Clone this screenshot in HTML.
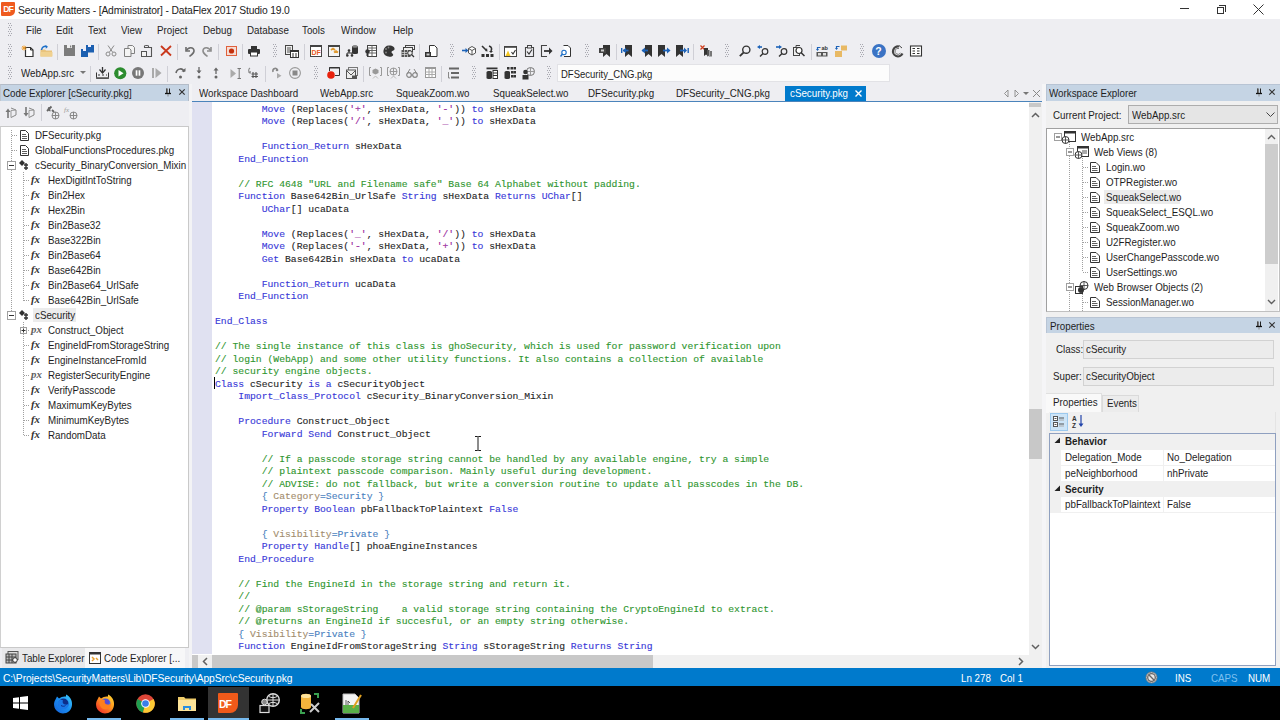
<!DOCTYPE html>
<html><head><meta charset="utf-8">
<style>
*{margin:0;padding:0;box-sizing:border-box}
html,body{width:1280px;height:720px;overflow:hidden;background:#eeeef2;font-family:"Liberation Sans",sans-serif;font-size:10.3px;color:#1e1e1e;position:relative}
.a{position:absolute}
.t{position:absolute;white-space:pre;line-height:13.5px;height:13.5px;font-size:10.7px;transform:scaleX(0.915);transform-origin:0 0}
#code{left:215px;top:103.8px;font-family:"Liberation Mono",monospace;font-size:9.73px;line-height:12.5px;white-space:pre;letter-spacing:0;color:#262626;-webkit-text-stroke:0.12px currentColor}
.k{color:#3838d8}.c{color:#2f962f}.s{color:#9a2a9e}.b{color:#4a7fc0}.m{color:#a38d6d}
.hdr{background:#c5d4e4}
.grip{position:absolute;width:4px;background-image:radial-gradient(circle,#a0a0a8 0.7px,transparent 0.8px);background-size:2px 2px}
.sep{position:absolute;width:1px;background:#cfcfd6}

.dv{position:absolute;width:1px;background-image:linear-gradient(#a0a0a0 50%,transparent 50%);background-size:1px 2px}
.dh{position:absolute;height:1px;background-image:linear-gradient(90deg,#a0a0a0 50%,transparent 50%);background-size:2px 1px}
svg{position:absolute;overflow:visible}
</style></head><body>
<!-- TITLE BAR -->
<div class="a" style="left:0;top:0;width:1280px;height:19px;background:#fff"></div>
<div class="a" style="left:1px;top:2px;width:14px;height:14px;background:#ef5b1f;border-radius:1px 1px 5px 1px"></div>
<div class="t" style="left:3.2px;top:3.6px;font-size:8.6px;line-height:10px;height:10px;color:#fff;font-weight:bold;letter-spacing:-0.9px;transform:none">DF</div>
<div class="t" style="left:18px;top:3.9px;font-size:10.3px;letter-spacing:-0.15px;color:#222;transform:none">Security Matters - [Administrator] - DataFlex 2017 Studio 19.0</div>
<div class="a" style="left:1180px;top:8px;width:9px;height:1px;background:#333"></div>
<div class="a" style="left:1217px;top:7px;width:7px;height:7px;border:1px solid #333"></div>
<div class="a" style="left:1219px;top:5px;width:7px;height:7px;border-top:1px solid #333;border-right:1px solid #333"></div>
<svg style="left:1253px;top:4px" width="11" height="11"><path d="M0.5 0.5L10.5 10.5M10.5 0.5L0.5 10.5" stroke="#333" stroke-width="1"/></svg>

<!-- MENU -->

<div class="t" style="left:25.5px;top:24.25px">File</div>
<div class="t" style="left:55.5px;top:24.25px">Edit</div>
<div class="t" style="left:87.5px;top:24.25px">Text</div>
<div class="t" style="left:120.5px;top:24.25px">View</div>
<div class="t" style="left:156.5px;top:24.25px">Project</div>
<div class="t" style="left:202.5px;top:24.25px">Debug</div>
<div class="t" style="left:246.5px;top:24.25px">Database</div>
<div class="t" style="left:302px;top:24.25px">Tools</div>
<div class="t" style="left:340.5px;top:24.25px">Window</div>
<div class="t" style="left:392.5px;top:24.25px">Help</div>

<!-- LEFT PANEL -->
<div class="a hdr" style="left:0;top:84px;width:189px;height:17px;border-top:1px solid #b4bcc8;border-right:1px solid #b4bcc8;border-left:1px solid #c0c6ce"></div>
<div class="t" style="left:3px;top:86.5px;color:#1e1e1e">Code Explorer [cSecurity.pkg]</div>
<svg style="left:164.5px;top:88px" width="6" height="9"><path d="M1.5 0.5V5M4.5 0.5V5" stroke="#222" stroke-width="1" fill="none"/><rect x="1.5" y="0.5" width="1.5" height="4.5" fill="#777"/><path d="M0 5.5H6" stroke="#111" stroke-width="1.3"/><path d="M3 6V8.5" stroke="#777" stroke-width="0.8"/></svg>
<svg style="left:178.5px;top:88.8px" width="6" height="6"><path d="M0.3 0.3L5.7 5.7M5.7 0.3L0.3 5.7" stroke="#333" stroke-width="1.2"/></svg>
<div class="a" style="left:0;top:101px;width:189px;height:25px;background:#eeeef2"></div>
<div class="sep" style="left:41px;top:104px;height:17px"></div>
<div class="a" style="left:0;top:126px;width:189px;height:522px;background:#fff;border:1px solid #c9c9c9;border-left-color:#d0d0d0"></div>
<div class="dv" style="left:11px;top:130px;height:186px"></div>
<div class="dv" style="left:23px;top:172px;height:129px"></div>
<div class="dv" style="left:23px;top:322px;height:114px"></div>
<div class="dh" style="left:12px;top:135px;width:6px"></div>
<svg style="left:20px;top:130px" width="9" height="11"><path d="M0.5 0.5H5.5L8.5 3.5V10.5H0.5Z" fill="#fff" stroke="#333"/><path d="M2 4.5H6M2 6.5H7M2 8.5H7" stroke="#333" stroke-width="0.8"/></svg>
<div class="t" style="left:35px;top:128.5px">DFSecurity.pkg</div>
<div class="dh" style="left:12px;top:150px;width:6px"></div>
<svg style="left:20px;top:145px" width="9" height="11"><path d="M0.5 0.5H5.5L8.5 3.5V10.5H0.5Z" fill="#fff" stroke="#333"/><path d="M2 4.5H6M2 6.5H7M2 8.5H7" stroke="#333" stroke-width="0.8"/></svg>
<div class="t" style="left:35px;top:143.5px">GlobalFunctionsProcedures.pkg</div>
<svg style="left:7px;top:161px" width="9" height="9"><rect x="0.5" y="0.5" width="8" height="8" fill="#fff" stroke="#a0a0a0"/><path d="M2 4.5H7" stroke="#333"/></svg>
<svg style="left:18px;top:159px" width="12" height="12"><path d="M1 4L4 1L7 4L4 7Z" fill="#333"/><path d="M6 6H10M8 4V11M6 9H10" stroke="#333" stroke-width="1.4"/></svg>
<div class="t" style="left:35px;top:158.5px">cSecurity_BinaryConversion_Mixin</div>
<div class="dh" style="left:24px;top:180px;width:6px"></div>
<div class="t" style="left:31px;top:173.0px;font-family:'Liberation Serif';font-style:italic;font-weight:bold;font-size:10.8px;color:#333;transform:none">fx</div>
<div class="t" style="left:47.5px;top:173.5px">HexDigitIntToString</div>
<div class="dh" style="left:24px;top:195px;width:6px"></div>
<div class="t" style="left:31px;top:188.0px;font-family:'Liberation Serif';font-style:italic;font-weight:bold;font-size:10.8px;color:#333;transform:none">fx</div>
<div class="t" style="left:47.5px;top:188.5px">Bin2Hex</div>
<div class="dh" style="left:24px;top:210px;width:6px"></div>
<div class="t" style="left:31px;top:203.0px;font-family:'Liberation Serif';font-style:italic;font-weight:bold;font-size:10.8px;color:#333;transform:none">fx</div>
<div class="t" style="left:47.5px;top:203.5px">Hex2Bin</div>
<div class="dh" style="left:24px;top:225px;width:6px"></div>
<div class="t" style="left:31px;top:218.0px;font-family:'Liberation Serif';font-style:italic;font-weight:bold;font-size:10.8px;color:#333;transform:none">fx</div>
<div class="t" style="left:47.5px;top:218.5px">Bin2Base32</div>
<div class="dh" style="left:24px;top:240px;width:6px"></div>
<div class="t" style="left:31px;top:233.0px;font-family:'Liberation Serif';font-style:italic;font-weight:bold;font-size:10.8px;color:#333;transform:none">fx</div>
<div class="t" style="left:47.5px;top:233.5px">Base322Bin</div>
<div class="dh" style="left:24px;top:255px;width:6px"></div>
<div class="t" style="left:31px;top:248.0px;font-family:'Liberation Serif';font-style:italic;font-weight:bold;font-size:10.8px;color:#333;transform:none">fx</div>
<div class="t" style="left:47.5px;top:248.5px">Bin2Base64</div>
<div class="dh" style="left:24px;top:270px;width:6px"></div>
<div class="t" style="left:31px;top:263.0px;font-family:'Liberation Serif';font-style:italic;font-weight:bold;font-size:10.8px;color:#333;transform:none">fx</div>
<div class="t" style="left:47.5px;top:263.5px">Base642Bin</div>
<div class="dh" style="left:24px;top:285px;width:6px"></div>
<div class="t" style="left:31px;top:278.0px;font-family:'Liberation Serif';font-style:italic;font-weight:bold;font-size:10.8px;color:#333;transform:none">fx</div>
<div class="t" style="left:47.5px;top:278.5px">Bin2Base64_UrlSafe</div>
<div class="dh" style="left:24px;top:300px;width:6px"></div>
<div class="t" style="left:31px;top:293.0px;font-family:'Liberation Serif';font-style:italic;font-weight:bold;font-size:10.8px;color:#333;transform:none">fx</div>
<div class="t" style="left:47.5px;top:293.5px">Base642Bin_UrlSafe</div>
<svg style="left:7px;top:311px" width="9" height="9"><rect x="0.5" y="0.5" width="8" height="8" fill="#fff" stroke="#a0a0a0"/><path d="M2 4.5H7" stroke="#333"/></svg>
<svg style="left:18px;top:309px" width="12" height="12"><path d="M1 4L4 1L7 4L4 7Z" fill="#333"/><path d="M6 6H10M8 4V11M6 9H10" stroke="#333" stroke-width="1.4"/></svg>
<div class="a" style="left:33px;top:308px;width:43px;height:14px;background:#ececec"></div>
<div class="t" style="left:35px;top:308.5px">cSecurity</div>
<div class="dh" style="left:24px;top:330px;width:6px"></div>
<svg style="left:20px;top:327px" width="7" height="7"><rect x="0.5" y="0.5" width="6" height="6" fill="#fff" stroke="#a0a0a0"/><path d="M1.5 3.5H5.5M3.5 1.5V5.5" stroke="#333"/></svg>
<div class="t" style="left:31px;top:323.0px;font-family:'Liberation Serif';font-style:italic;font-weight:bold;font-size:10.8px;color:#606060;transform:none">px</div>
<div class="t" style="left:47.5px;top:323.5px">Construct_Object</div>
<div class="dh" style="left:24px;top:345px;width:6px"></div>
<div class="t" style="left:31px;top:338.0px;font-family:'Liberation Serif';font-style:italic;font-weight:bold;font-size:10.8px;color:#333;transform:none">fx</div>
<div class="t" style="left:47.5px;top:338.5px">EngineIdFromStorageString</div>
<div class="dh" style="left:24px;top:360px;width:6px"></div>
<div class="t" style="left:31px;top:353.0px;font-family:'Liberation Serif';font-style:italic;font-weight:bold;font-size:10.8px;color:#333;transform:none">fx</div>
<div class="t" style="left:47.5px;top:353.5px">EngineInstanceFromId</div>
<div class="dh" style="left:24px;top:375px;width:6px"></div>
<div class="t" style="left:31px;top:368.0px;font-family:'Liberation Serif';font-style:italic;font-weight:bold;font-size:10.8px;color:#606060;transform:none">px</div>
<div class="t" style="left:47.5px;top:368.5px">RegisterSecurityEngine</div>
<div class="dh" style="left:24px;top:390px;width:6px"></div>
<div class="t" style="left:31px;top:383.0px;font-family:'Liberation Serif';font-style:italic;font-weight:bold;font-size:10.8px;color:#333;transform:none">fx</div>
<div class="t" style="left:47.5px;top:383.5px">VerifyPasscode</div>
<div class="dh" style="left:24px;top:405px;width:6px"></div>
<div class="t" style="left:31px;top:398.0px;font-family:'Liberation Serif';font-style:italic;font-weight:bold;font-size:10.8px;color:#333;transform:none">fx</div>
<div class="t" style="left:47.5px;top:398.5px">MaximumKeyBytes</div>
<div class="dh" style="left:24px;top:420px;width:6px"></div>
<div class="t" style="left:31px;top:413.0px;font-family:'Liberation Serif';font-style:italic;font-weight:bold;font-size:10.8px;color:#333;transform:none">fx</div>
<div class="t" style="left:47.5px;top:413.5px">MinimumKeyBytes</div>
<div class="dh" style="left:24px;top:435px;width:6px"></div>
<div class="t" style="left:31px;top:428.0px;font-family:'Liberation Serif';font-style:italic;font-weight:bold;font-size:10.8px;color:#333;transform:none">fx</div>
<div class="t" style="left:47.5px;top:428.5px">RandomData</div>
<div class="a" style="left:0;top:648px;width:189px;height:20px;background:#eeeef2"></div>
<div class="a" style="left:2px;top:648px;width:83px;height:20px;background:#e8e8ea"></div>
<div class="a" style="left:85px;top:648px;width:100px;height:20px;background:#f7f7f8"></div>
<div class="t" style="left:22px;top:651.5px">Table Explorer</div>
<div class="t" style="left:104px;top:651.5px">Code Explorer [...</div>
<svg style="left:5px;top:651px" width="14" height="13"><rect x="3" y="0.5" width="10" height="8" fill="#ddd" stroke="#555"/><rect x="1" y="3" width="10" height="9" fill="#bbb" stroke="#444"/><path d="M1 6H11M1 9H11M4 3V12M7 3V12" stroke="#444"/><circle cx="10" cy="9" r="2.3" fill="#fff" stroke="#333"/></svg>
<svg style="left:89px;top:652px" width="12" height="12"><rect x="0.5" y="0.5" width="11" height="11" fill="#fff" stroke="#333"/><rect x="0.5" y="0.5" width="11" height="2" fill="#333"/><path d="M3 5L5 7L3 9M7 6L9 8" stroke="#e8a030" stroke-width="1.5" fill="none"/></svg>
<div class="a" style="left:189px;top:84px;width:3px;height:584px;background:#f3f3f5"></div>
<!-- EDITOR -->
<div class="a" style="left:192px;top:102px;width:837px;height:553px;background:#fff"></div>
<div class="a" style="left:192px;top:100.5px;width:850px;height:1.6px;background:#4b84bb"></div>
<div class="a" style="left:192px;top:102px;width:20px;height:552px;background:#e0e1f1"></div>
<div class="t" style="left:199px;top:87px">Workspace Dashboard</div>
<div class="t" style="left:320px;top:87px">WebApp.src</div>
<div class="t" style="left:395.5px;top:87px">SqueakZoom.wo</div>
<div class="t" style="left:492.5px;top:87px">SqueakSelect.wo</div>
<div class="t" style="left:588px;top:87px">DFSecurity.pkg</div>
<div class="t" style="left:676px;top:87px">DFSecurity_CNG.pkg</div>
<div class="a" style="left:785px;top:86px;width:81px;height:15px;background:#007acc"></div>
<div class="t" style="left:790px;top:87px;color:#fff">cSecurity.pkg</div>
<svg style="left:855px;top:89.5px" width="7" height="7"><path d="M0.5 0.5L6.5 6.5M6.5 0.5L0.5 6.5" stroke="#fff" stroke-width="1.4"/></svg>
<svg style="left:1003px;top:89px" width="40" height="9"><path d="M5 1L1.5 4.5L5 8Z" fill="none" stroke="#888" stroke-width="0.9"/><path d="M12 1L15.5 4.5L12 8Z" fill="none" stroke="#888" stroke-width="0.9"/><path d="M20 3H26L23 6Z" fill="#777"/><path d="M30 1L37 8M37 1L30 8" stroke="#888" stroke-width="1"/></svg>
<div class="a" style="left:1029px;top:102px;width:13px;height:566px;background:#f0f0f0"></div>
<div class="a" style="left:1029px;top:103px;width:12px;height:4px;background:#c8c8c8"></div>
<svg style="left:1031px;top:112px" width="9" height="6"><path d="M1 5L4.5 1.5L8 5" stroke="#606060" stroke-width="1.5" fill="none"/></svg>
<div class="a" style="left:1029px;top:409px;width:13px;height:50px;background:#c8c8c8"></div>
<svg style="left:1031px;top:644px" width="9" height="6"><path d="M1 1L4.5 4.5L8 1" stroke="#606060" stroke-width="1.5" fill="none"/></svg>
<div class="a" style="left:192px;top:655px;width:837px;height:13px;background:#f0f0f0"></div>
<div class="a" style="left:212px;top:655px;width:441px;height:13px;background:#c8c8c8"></div>
<div class="a" style="left:192px;top:655px;width:6px;height:13px;background:#c8c8c8"></div>
<svg style="left:202px;top:657px" width="6" height="9"><path d="M5 1L1.5 4.5L5 8" stroke="#606060" stroke-width="1.5" fill="none"/></svg>
<svg style="left:1018px;top:657px" width="6" height="9"><path d="M1 1L4.5 4.5L1 8" stroke="#606060" stroke-width="1.5" fill="none"/></svg>
<div class="a" style="left:214px;top:377px;width:1px;height:12px;background:#000"></div>
<svg style="left:474px;top:436px" width="8" height="15"><path d="M1 0.5H3.5L4 1L4.5 0.5H7M4 1V14M1 14.5H3.5L4 14L4.5 14.5H7" stroke="#fff" stroke-width="2.2" fill="none"/><path d="M1 0.5H3.5L4 1L4.5 0.5H7M4 1V14M1 14.5H3.5L4 14L4.5 14.5H7" stroke="#000" stroke-width="0.9" fill="none"/></svg>
<div class="a" style="left:1042px;top:84px;width:4px;height:584px;background:#f5f5f7"></div>
<div id="code" class="a">        <span class="k">Move</span> (Replaces(<span class="s">&#x27;+&#x27;</span>, sHexData, <span class="s">&#x27;-&#x27;</span>)) <span class="k">to</span> sHexData
        <span class="k">Move</span> (Replaces(<span class="s">&#x27;/&#x27;</span>, sHexData, <span class="s">&#x27;_&#x27;</span>)) <span class="k">to</span> sHexData

        <span class="k">Function_Return</span> sHexData
    <span class="k">End_Function</span>

    <span class="c">// RFC 4648 &quot;URL and Filename safe&quot; Base 64 Alphabet without padding.</span>
    <span class="k">Function</span> Base642Bin_UrlSafe <span class="k">String</span> sHexData <span class="k">Returns</span> <span class="k">UChar</span>[]
        <span class="k">UChar</span>[] ucaData

        <span class="k">Move</span> (Replaces(<span class="s">&#x27;_&#x27;</span>, sHexData, <span class="s">&#x27;/&#x27;</span>)) <span class="k">to</span> sHexData
        <span class="k">Move</span> (Replaces(<span class="s">&#x27;-&#x27;</span>, sHexData, <span class="s">&#x27;+&#x27;</span>)) <span class="k">to</span> sHexData
        <span class="k">Get</span> Base642Bin sHexData <span class="k">to</span> ucaData

        <span class="k">Function_Return</span> ucaData
    <span class="k">End_Function</span>

<span class="k">End_Class</span>

<span class="c">// The single instance of this class is ghoSecurity, which is used for password verification upon</span>
<span class="c">// login (WebApp) and some other utility functions. It also contains a collection of available</span>
<span class="c">// security engine objects.</span>
<span class="k">Class</span> cSecurity <span class="k">is</span> <span class="k">a</span> cSecurityObject
    <span class="k">Import_Class_Protocol</span> cSecurity_BinaryConversion_Mixin

    <span class="k">Procedure</span> Construct_Object
        <span class="k">Forward</span> <span class="k">Send</span> Construct_Object

        <span class="c">// If a passcode storage string cannot be handled by any available engine, try a simple</span>
        <span class="c">// plaintext passcode comparison. Mainly useful during development.</span>
        <span class="c">// ADVISE: do not fallback, but write a conversion routine to update all passcodes in the DB.</span>
        <span class="b">{ </span><span class="m">Category</span><span class="b">=Security }</span>
        <span class="k">Property</span> <span class="k">Boolean</span> pbFallbackToPlaintext <span class="k">False</span>

        <span class="b">{ </span><span class="m">Visibility</span><span class="b">=Private }</span>
        <span class="k">Property</span> <span class="k">Handle</span>[] phoaEngineInstances
    <span class="k">End_Procedure</span>

    <span class="c">// Find the EngineId in the storage string and return it.</span>
    <span class="c">//</span>
    <span class="c">// @param sStorageString    a valid storage string containing the CryptoEngineId to extract.</span>
    <span class="c">// @returns an EngineId if succesful, or an empty string otherwise.</span>
    <span class="b">{ </span><span class="m">Visibility</span><span class="b">=Private }</span>
    <span class="k">Function</span> EngineIdFromStorageString <span class="k">String</span> sStorageString <span class="k">Returns</span> <span class="k">String</span></div>
<!-- RIGHT -->
<div class="a" style="left:1046px;top:84px;width:234px;height:584px;background:#f0f0f0"></div>
<div class="a hdr" style="left:1046px;top:84px;width:234px;height:17px;border-top:1px solid #b8c4d4;border-left:1px solid #b8c4d4"></div>
<div class="t" style="left:1049px;top:86.5px">Workspace Explorer</div>
<svg style="left:1255.5px;top:88px" width="6" height="9"><path d="M1.5 0.5V5M4.5 0.5V5" stroke="#222" stroke-width="1" fill="none"/><rect x="1.5" y="0.5" width="1.5" height="4.5" fill="#777"/><path d="M0 5.5H6" stroke="#111" stroke-width="1.3"/><path d="M3 6V8.5" stroke="#777" stroke-width="0.8"/></svg>
<svg style="left:1269px;top:88.8px" width="6" height="6"><path d="M0.3 0.3L5.7 5.7M5.7 0.3L0.3 5.7" stroke="#333" stroke-width="1.2"/></svg>
<div class="t" style="left:1052.5px;top:109px">Current Project:</div>
<div class="a" style="left:1128px;top:105px;width:150px;height:19px;background:#e5e5e5;border:1px solid #adadad"></div>
<div class="t" style="left:1131.5px;top:109px">WebApp.src</div>
<svg style="left:1266px;top:112px" width="9" height="6"><path d="M0.5 0.5L4.5 4.5L8.5 0.5" stroke="#444" stroke-width="1" fill="none"/></svg>
<div class="a" style="left:1046px;top:128px;width:234px;height:184px;background:#fff;border:1px solid #828790;border-color:#a0a0a0 #c0c0c0 #c0c0c0 #a0a0a0"></div>
<div class="a" style="left:1265px;top:129px;width:13px;height:182px;background:#f0f0f0"></div>
<div class="a" style="left:1265px;top:144px;width:13px;height:120px;background:#cdcdcd"></div>
<svg style="left:1267px;top:134px" width="9" height="6"><path d="M1 5L4.5 1.5L8 5" stroke="#606060" stroke-width="1.4" fill="none"/></svg>
<svg style="left:1267px;top:299px" width="9" height="6"><path d="M1 1L4.5 4.5L8 1" stroke="#606060" stroke-width="1.4" fill="none"/></svg>
<div class="dv" style="left:1069px;top:142px;height:170px"></div>
<div class="dv" style="left:1082px;top:158px;height:113px"></div>
<div class="dv" style="left:1082px;top:294px;height:18px"></div>
<svg style="left:1053.5px;top:133px" width="8" height="8"><rect x="0.5" y="0.5" width="7" height="7" fill="#fff" stroke="#a0a0a0"/><path d="M2 4H6" stroke="#333"/></svg>
<svg style="left:1061px;top:131px" width="16" height="14"><rect x="3.5" y="0.5" width="11" height="10" fill="#fff" stroke="#333"/><rect x="3.5" y="0.5" width="11" height="2" fill="#333"/><circle cx="4.5" cy="9" r="3.5" fill="#fff" stroke="#333"/><path d="M1 9H8M4.5 5.5V12.5" stroke="#333" stroke-width="0.8"/></svg>
<div class="t" style="left:1081px;top:131px">WebApp.src</div>
<svg style="left:1066px;top:148px" width="8" height="8"><rect x="0.5" y="0.5" width="7" height="7" fill="#fff" stroke="#a0a0a0"/><path d="M2 4H6" stroke="#333"/></svg>
<svg style="left:1074px;top:146px" width="16" height="14"><rect x="3.5" y="0.5" width="11" height="10" fill="#fff" stroke="#333"/><rect x="3.5" y="0.5" width="11" height="2" fill="#333"/><path d="M8 5H13M8 7H13" stroke="#555"/><circle cx="4.5" cy="9" r="3.5" fill="#fff" stroke="#333"/><path d="M1 9H8M4.5 5.5V12.5" stroke="#333" stroke-width="0.8"/></svg>
<div class="t" style="left:1093.5px;top:146px">Web Views (8)</div>
<div class="dh" style="left:1083px;top:167px;width:6px"></div>
<svg style="left:1090px;top:162px" width="10" height="11"><path d="M0.5 0.5H6L9.5 4V10.5H0.5Z" fill="#fff" stroke="#333"/><path d="M2 4.5H6M2 6.5H7.5M2 8.5H7.5" stroke="#333" stroke-width="0.8"/></svg>
<div class="t" style="left:1105.5px;top:160.5px">Login.wo</div>
<div class="dh" style="left:1083px;top:182px;width:6px"></div>
<svg style="left:1090px;top:177px" width="10" height="11"><path d="M0.5 0.5H6L9.5 4V10.5H0.5Z" fill="#fff" stroke="#333"/><path d="M2 4.5H6M2 6.5H7.5M2 8.5H7.5" stroke="#333" stroke-width="0.8"/></svg>
<div class="t" style="left:1105.5px;top:175.5px">OTPRegister.wo</div>
<div class="dh" style="left:1083px;top:197px;width:6px"></div>
<svg style="left:1090px;top:192px" width="10" height="11"><path d="M0.5 0.5H6L9.5 4V10.5H0.5Z" fill="#fff" stroke="#333"/><path d="M2 4.5H6M2 6.5H7.5M2 8.5H7.5" stroke="#333" stroke-width="0.8"/></svg>
<div class="a" style="left:1104px;top:190px;width:76px;height:14px;background:#ececec"></div>
<div class="t" style="left:1105.5px;top:190.5px">SqueakSelect.wo</div>
<div class="dh" style="left:1083px;top:212px;width:6px"></div>
<svg style="left:1090px;top:207px" width="10" height="11"><path d="M0.5 0.5H6L9.5 4V10.5H0.5Z" fill="#fff" stroke="#333"/><path d="M2 4.5H6M2 6.5H7.5M2 8.5H7.5" stroke="#333" stroke-width="0.8"/></svg>
<div class="t" style="left:1105.5px;top:205.5px">SqueakSelect_ESQL.wo</div>
<div class="dh" style="left:1083px;top:227px;width:6px"></div>
<svg style="left:1090px;top:222px" width="10" height="11"><path d="M0.5 0.5H6L9.5 4V10.5H0.5Z" fill="#fff" stroke="#333"/><path d="M2 4.5H6M2 6.5H7.5M2 8.5H7.5" stroke="#333" stroke-width="0.8"/></svg>
<div class="t" style="left:1105.5px;top:220.5px">SqueakZoom.wo</div>
<div class="dh" style="left:1083px;top:242px;width:6px"></div>
<svg style="left:1090px;top:237px" width="10" height="11"><path d="M0.5 0.5H6L9.5 4V10.5H0.5Z" fill="#fff" stroke="#333"/><path d="M2 4.5H6M2 6.5H7.5M2 8.5H7.5" stroke="#333" stroke-width="0.8"/></svg>
<div class="t" style="left:1105.5px;top:235.5px">U2FRegister.wo</div>
<div class="dh" style="left:1083px;top:257px;width:6px"></div>
<svg style="left:1090px;top:252px" width="10" height="11"><path d="M0.5 0.5H6L9.5 4V10.5H0.5Z" fill="#fff" stroke="#333"/><path d="M2 4.5H6M2 6.5H7.5M2 8.5H7.5" stroke="#333" stroke-width="0.8"/></svg>
<div class="t" style="left:1105.5px;top:250.5px">UserChangePasscode.wo</div>
<div class="dh" style="left:1083px;top:272px;width:6px"></div>
<svg style="left:1090px;top:267px" width="10" height="11"><path d="M0.5 0.5H6L9.5 4V10.5H0.5Z" fill="#fff" stroke="#333"/><path d="M2 4.5H6M2 6.5H7.5M2 8.5H7.5" stroke="#333" stroke-width="0.8"/></svg>
<div class="t" style="left:1105.5px;top:265.5px">UserSettings.wo</div>
<svg style="left:1066px;top:283px" width="8" height="8"><rect x="0.5" y="0.5" width="7" height="7" fill="#fff" stroke="#a0a0a0"/><path d="M2 4H6" stroke="#333"/></svg>
<svg style="left:1075px;top:281px" width="14" height="13"><circle cx="9" cy="4.5" r="4" fill="#fff" stroke="#333"/><path d="M5 4.5H13M9 0.5V8.5" stroke="#333" stroke-width="0.8"/><rect x="0.5" y="5.5" width="7" height="7" fill="#fff" stroke="#333"/><circle cx="6" cy="9" r="3" fill="#333"/></svg>
<div class="t" style="left:1093.5px;top:281px">Web Browser Objects (2)</div>
<div class="dh" style="left:1083px;top:302px;width:6px"></div>
<svg style="left:1090px;top:297px" width="10" height="11"><path d="M0.5 0.5H6L9.5 4V10.5H0.5Z" fill="#fff" stroke="#333"/><path d="M2 4.5H6M2 6.5H7.5M2 8.5H7.5" stroke="#333" stroke-width="0.8"/></svg>
<div class="t" style="left:1105.5px;top:295.5px">SessionManager.wo</div>
<div class="a hdr" style="left:1046px;top:317px;width:234px;height:16px;border-top:1px solid #b8c4d4;border-left:1px solid #b8c4d4"></div>
<div class="t" style="left:1049.5px;top:319.5px">Properties</div>
<svg style="left:1255.5px;top:321px" width="6" height="9"><path d="M1.5 0.5V5M4.5 0.5V5" stroke="#222" stroke-width="1" fill="none"/><rect x="1.5" y="0.5" width="1.5" height="4.5" fill="#777"/><path d="M0 5.5H6" stroke="#111" stroke-width="1.3"/><path d="M3 6V8.5" stroke="#777" stroke-width="0.8"/></svg>
<svg style="left:1269px;top:322px" width="6" height="6"><path d="M0.3 0.3L5.7 5.7M5.7 0.3L0.3 5.7" stroke="#333" stroke-width="1.2"/></svg>
<div class="t" style="left:1056px;top:343px">Class:</div>
<div class="a" style="left:1083px;top:340px;width:191px;height:19px;background:#ececec;border:1px solid #d2d2d2"></div>
<div class="t" style="left:1085.5px;top:343px">cSecurity</div>
<div class="t" style="left:1052.5px;top:370px">Super:</div>
<div class="a" style="left:1083px;top:366.5px;width:191px;height:19px;background:#ececec;border:1px solid #d2d2d2"></div>
<div class="t" style="left:1085.5px;top:370px">cSecurityObject</div>
<div class="a" style="left:1046px;top:393px;width:56px;height:20px;background:#f9f9f9;border-top:1px solid #e0e0e0;border-right:1px solid #e0e0e0"></div>
<div class="a" style="left:1102px;top:394.5px;width:37px;height:17px;background:#ececec;border:1px solid #dadada;border-bottom:none"></div>
<div class="t" style="left:1052.5px;top:395.5px">Properties</div>
<div class="t" style="left:1106.5px;top:397px">Events</div>
<div class="a" style="left:1049px;top:412px;width:227px;height:21px;background:#f0f0f0;border-right:1px solid #e4e4e4"></div>
<div class="a" style="left:1049.5px;top:412.5px;width:18px;height:18px;background:#cce4f7;border:1px solid #9cc9ee"></div>
<svg style="left:1053px;top:416px" width="12" height="11"><rect x="0.5" y="0.5" width="4" height="4" fill="#fff" stroke="#555"/><rect x="0.5" y="6.5" width="4" height="4" fill="#fff" stroke="#555"/><path d="M1.5 2.5H3.5M1.5 8.5H3.5M6 2H11M6 8H11" stroke="#555"/><path d="M6 4H11M6 10H11" stroke="#aaa"/></svg>
<svg style="left:1072px;top:415px" width="12" height="13"><text x="0" y="6" font-family="Liberation Sans" font-size="6.5" font-weight="bold" fill="#333">A</text><text x="0" y="12.5" font-family="Liberation Sans" font-size="6.5" font-weight="bold" fill="#333">Z</text><path d="M9 0V10" stroke="#2244aa" stroke-width="1.2"/><path d="M6.5 8.5L9 12L11.5 8.5Z" fill="#2244aa"/></svg>
<div class="a" style="left:1049px;top:433px;width:227px;height:233px;background:#fff;border:1px solid #8fa0c0"></div>
<div class="a" style="left:1050px;top:434px;width:225px;height:16px;background:#f0f0f0"></div>
<div class="a" style="left:1050px;top:481px;width:225px;height:16px;background:#f0f0f0"></div>
<div class="a" style="left:1050px;top:450px;width:11px;height:31px;background:#f0f0f0"></div>
<div class="a" style="left:1050px;top:497px;width:11px;height:15.5px;background:#f0f0f0"></div>
<div class="a" style="left:1163px;top:450px;width:1px;height:62.5px;background:#f0f0f0"></div>
<div class="a" style="left:1061px;top:465px;width:214px;height:1px;background:#f0f0f0"></div>
<div class="a" style="left:1061px;top:512px;width:214px;height:1px;background:#f0f0f0"></div>
<svg style="left:1054px;top:437px" width="7" height="7"><path d="M6 0.5V6H0.5Z" fill="#222"/></svg>
<svg style="left:1054px;top:485px" width="7" height="7"><path d="M6 0.5V6H0.5Z" fill="#222"/></svg>
<div class="t" style="left:1064.5px;top:435px;font-weight:bold">Behavior</div>
<div class="t" style="left:1064.5px;top:483px;font-weight:bold">Security</div>
<div class="t" style="left:1064.5px;top:451.0px">Delegation_Mode</div>
<div class="t" style="left:1166.5px;top:451.0px">No_Delegation</div>
<div class="t" style="left:1064.5px;top:467.0px">peNeighborhood</div>
<div class="t" style="left:1166.5px;top:467.0px">nhPrivate</div>
<div class="t" style="left:1064.5px;top:498.2px">pbFallbackToPlaintext</div>
<div class="t" style="left:1166.5px;top:498.2px">False</div>
<!-- TOOLBARS -->
<svg style="left:8px;top:23px" width="4" height="14"><rect x="0" y="0" width="1" height="1" fill="#a8a8b0"/><rect x="2" y="0" width="1" height="1" fill="#a8a8b0"/><rect x="1" y="2" width="1" height="1" fill="#a8a8b0"/><rect x="3" y="2" width="1" height="1" fill="#a8a8b0"/><rect x="0" y="4" width="1" height="1" fill="#a8a8b0"/><rect x="2" y="4" width="1" height="1" fill="#a8a8b0"/><rect x="1" y="6" width="1" height="1" fill="#a8a8b0"/><rect x="3" y="6" width="1" height="1" fill="#a8a8b0"/><rect x="0" y="8" width="1" height="1" fill="#a8a8b0"/><rect x="2" y="8" width="1" height="1" fill="#a8a8b0"/><rect x="1" y="10" width="1" height="1" fill="#a8a8b0"/><rect x="3" y="10" width="1" height="1" fill="#a8a8b0"/><rect x="0" y="12" width="1" height="1" fill="#a8a8b0"/><rect x="2" y="12" width="1" height="1" fill="#a8a8b0"/></svg>
<svg style="left:8px;top:44px" width="4" height="14"><rect x="0" y="0" width="1" height="1" fill="#a8a8b0"/><rect x="2" y="0" width="1" height="1" fill="#a8a8b0"/><rect x="1" y="2" width="1" height="1" fill="#a8a8b0"/><rect x="3" y="2" width="1" height="1" fill="#a8a8b0"/><rect x="0" y="4" width="1" height="1" fill="#a8a8b0"/><rect x="2" y="4" width="1" height="1" fill="#a8a8b0"/><rect x="1" y="6" width="1" height="1" fill="#a8a8b0"/><rect x="3" y="6" width="1" height="1" fill="#a8a8b0"/><rect x="0" y="8" width="1" height="1" fill="#a8a8b0"/><rect x="2" y="8" width="1" height="1" fill="#a8a8b0"/><rect x="1" y="10" width="1" height="1" fill="#a8a8b0"/><rect x="3" y="10" width="1" height="1" fill="#a8a8b0"/><rect x="0" y="12" width="1" height="1" fill="#a8a8b0"/><rect x="2" y="12" width="1" height="1" fill="#a8a8b0"/></svg>
<svg style="left:8px;top:65.5px" width="4" height="14"><rect x="0" y="0" width="1" height="1" fill="#a8a8b0"/><rect x="2" y="0" width="1" height="1" fill="#a8a8b0"/><rect x="1" y="2" width="1" height="1" fill="#a8a8b0"/><rect x="3" y="2" width="1" height="1" fill="#a8a8b0"/><rect x="0" y="4" width="1" height="1" fill="#a8a8b0"/><rect x="2" y="4" width="1" height="1" fill="#a8a8b0"/><rect x="1" y="6" width="1" height="1" fill="#a8a8b0"/><rect x="3" y="6" width="1" height="1" fill="#a8a8b0"/><rect x="0" y="8" width="1" height="1" fill="#a8a8b0"/><rect x="2" y="8" width="1" height="1" fill="#a8a8b0"/><rect x="1" y="10" width="1" height="1" fill="#a8a8b0"/><rect x="3" y="10" width="1" height="1" fill="#a8a8b0"/><rect x="0" y="12" width="1" height="1" fill="#a8a8b0"/><rect x="2" y="12" width="1" height="1" fill="#a8a8b0"/></svg>
<svg style="left:21px;top:45px" width="13" height="12"><path d="M4.5 2.5H9.5L12 5V11.5H4.5Z" fill="#fff" stroke="#333" stroke-width="1.2"/><path d="M9.5 2.5V5H12" fill="none" stroke="#333"/><path d="M3 0.5V5.5M0.5 3H5.5M1.2 1.2L4.8 4.8M4.8 1.2L1.2 4.8" stroke="#f0a030" stroke-width="1"/></svg>
<svg style="left:40px;top:45px" width="13" height="12"><path d="M0.5 4.5H5L6 5.5H12V11.5H0.5Z" fill="#e9c37c"/><path d="M0.5 7H12.5V11.5H0.5Z" fill="#f0d190"/><path d="M1.5 5C2 2 4 1 6.5 1.5" stroke="#1c6fc8" stroke-width="1.5" fill="none"/><path d="M5.5 0L8 1.8L5.8 3.8Z" fill="#1c6fc8"/></svg>
<div class="sep" style="left:56.5px;top:43.5px;height:16px"></div>
<svg style="left:63.5px;top:45px" width="11" height="11"><path d="M0 0H11V11H0Z" fill="#7c7c7c"/><rect x="3" y="0" width="5" height="3" fill="#eee"/><rect x="6" y="0.5" width="1.2" height="2" fill="#7c7c7c"/></svg>
<svg style="left:81px;top:45px" width="13" height="12"><path d="M0 4H7V12H0Z" fill="#1b5fb0"/><rect x="2" y="4" width="3" height="2" fill="#eef"/><path d="M5 0H13V7.5H5Z" fill="#1b5fb0"/><rect x="7" y="0" width="3" height="2" fill="#eef"/></svg>
<div class="sep" style="left:98.4px;top:43.5px;height:16px"></div>
<svg style="left:105px;top:45px" width="12" height="12"><path d="M3 0.5L7.5 7M9 0.5L4.5 7" stroke="#8a8a8a" stroke-width="1"/><circle cx="3" cy="9" r="2" fill="none" stroke="#8a8a8a"/><circle cx="9" cy="9" r="2" fill="none" stroke="#8a8a8a"/></svg>
<svg style="left:123.5px;top:45px" width="11" height="12"><path d="M4 0.5H8.5L10.5 2.5V8.5H4Z" fill="#f4f4f4" stroke="#808080"/><path d="M0.5 3.5H5.5L7 5V11.5H0.5Z" fill="#f4f4f4" stroke="#808080"/></svg>
<svg style="left:141px;top:45px" width="11" height="12"><path d="M3.5 2.5V1C3.5 0.5 7.5 0.5 7.5 1V2.5M3 2.5H10.5V11.5H4" fill="none" stroke="#555" stroke-width="1.1"/><rect x="0.5" y="6.5" width="5" height="5" fill="#f4f4f4" stroke="#555"/></svg>
<svg style="left:159.5px;top:45px" width="12" height="11"><path d="M1 1L11 10.5M11 1L1 10.5" stroke="#c9381c" stroke-width="1.8"/></svg>
<div class="sep" style="left:176.5px;top:43.5px;height:16px"></div>
<svg style="left:183.5px;top:45px" width="11" height="12"><path d="M2 2V6H6" stroke="#6c6c6c" stroke-width="1.6" fill="none"/><path d="M2.5 5.5C4 2 9.5 1.5 10 5.5C10.3 8 8 9.5 5.5 11.5" stroke="#6c6c6c" stroke-width="1.6" fill="none"/></svg>
<svg style="left:202px;top:45px" width="11" height="12"><path d="M9 2V6H5" stroke="#8c8c8c" stroke-width="1.6" fill="none"/><path d="M8.5 5.5C7 2 1.5 1.5 1 5.5C0.7 8 3 9.5 5.5 11.5" stroke="#8c8c8c" stroke-width="1.6" fill="none"/></svg>
<div class="sep" style="left:218.4px;top:43.5px;height:16px"></div>
<svg style="left:226px;top:46px" width="11" height="10"><rect x="0.5" y="0.5" width="10" height="9" fill="#f5ddd5" stroke="#e0603c"/><circle cx="5.5" cy="5" r="2.6" fill="#c4300c"/></svg>
<div class="sep" style="left:241.7px;top:43.5px;height:16px"></div>
<svg style="left:248px;top:45.5px" width="12" height="10"><rect x="3" y="0" width="6" height="3" fill="#333"/><rect x="0" y="3" width="12" height="5" rx="1" fill="#333"/><rect x="2.5" y="6" width="7" height="4" fill="#fff" stroke="#333"/></svg>
<svg style="left:273px;top:44px" width="4" height="14"><rect x="0" y="0" width="1" height="1" fill="#a8a8b0"/><rect x="2" y="0" width="1" height="1" fill="#a8a8b0"/><rect x="1" y="2" width="1" height="1" fill="#a8a8b0"/><rect x="3" y="2" width="1" height="1" fill="#a8a8b0"/><rect x="0" y="4" width="1" height="1" fill="#a8a8b0"/><rect x="2" y="4" width="1" height="1" fill="#a8a8b0"/><rect x="1" y="6" width="1" height="1" fill="#a8a8b0"/><rect x="3" y="6" width="1" height="1" fill="#a8a8b0"/><rect x="0" y="8" width="1" height="1" fill="#a8a8b0"/><rect x="2" y="8" width="1" height="1" fill="#a8a8b0"/><rect x="1" y="10" width="1" height="1" fill="#a8a8b0"/><rect x="3" y="10" width="1" height="1" fill="#a8a8b0"/><rect x="0" y="12" width="1" height="1" fill="#a8a8b0"/><rect x="2" y="12" width="1" height="1" fill="#a8a8b0"/></svg>
<svg style="left:285px;top:45px" width="14" height="13"><rect x="0.5" y="0.5" width="7" height="9" fill="#eee" stroke="#444"/><path d="M2 3H6M2 5H6M2 7H5" stroke="#555"/><rect x="5.5" y="5.5" width="8" height="7" fill="#fff" stroke="#333"/><rect x="5.5" y="5.5" width="8" height="1.5" fill="#333"/><path d="M7 9H9M10 9H12M7 11H9M10 11H12" stroke="#333"/></svg>
<div class="sep" style="left:303.5px;top:43.5px;height:16px"></div>
<svg style="left:310px;top:45px" width="12" height="12"><rect x="0.5" y="0.5" width="11" height="11" fill="#fff" stroke="#444"/><rect x="0" y="0" width="12" height="2" fill="#444"/><text x="1.5" y="10" font-family="Liberation Sans" font-size="7" font-weight="bold" fill="#e65a25">DF</text></svg>
<svg style="left:328px;top:45px" width="12" height="12"><rect x="0.5" y="0.5" width="11" height="11" fill="#f4f4f4" stroke="#444"/><rect x="0" y="0" width="12" height="2" fill="#444"/><path d="M3 5L5 3.5L7 5M6 7.5L8 6L10 7.5" stroke="#e09a30" stroke-width="1.8" fill="none"/></svg>
<svg style="left:346px;top:45px" width="13" height="12"><path d="M3 6V8M1 8H6M1 8V10M6 8V10" stroke="#333" stroke-width="1"/><circle cx="3" cy="5.5" r="1.3" fill="#333"/><circle cx="1.3" cy="10.5" r="1.3" fill="#333"/><circle cx="6" cy="10.5" r="1.3" fill="#333"/><path d="M6 1.5C6 0 12 0 12 1.5V8C12 9.3 6 9.3 6 8Z" fill="#333"/><ellipse cx="9" cy="1.7" rx="3" ry="1" fill="#888"/></svg>
<svg style="left:365px;top:45px" width="12" height="12"><rect x="2.5" y="0.5" width="9" height="11" fill="#fff" stroke="#444"/><path d="M3 3H11M3 5.5H11M3 8H11M7 0.5V11.5" stroke="#666"/><circle cx="2.5" cy="6.5" r="2.2" fill="#333"/><rect x="1.5" y="8.5" width="2" height="2.5" fill="#333"/></svg>
<svg style="left:383px;top:45px" width="12" height="12"><path d="M6 0.5C10 0.5 12 2.5 11.5 4.5C11 6 8.5 5.5 8.5 7C8.5 8.5 11 9 10 10.5C9 11.8 7 12 5.5 11.5C2 11 0 8.5 0.5 5.5C1 2.5 3 0.5 6 0.5Z" fill="#353535"/><circle cx="3" cy="4" r="0.9" fill="#888"/><circle cx="5.5" cy="2.5" r="0.9" fill="#888"/><circle cx="3" cy="7.5" r="0.9" fill="#888"/></svg>
<svg style="left:400.5px;top:45px" width="14" height="12"><rect x="4.5" y="0.5" width="9" height="4" fill="none" stroke="#444"/><rect x="2.5" y="2.5" width="9" height="4" fill="#eee" stroke="#444"/><rect x="0.5" y="5" width="9" height="7" fill="#555"/><path d="M0.5 7.5H9M0.5 9.5H9M3.5 5V12M6.5 5V12" stroke="#ddd" stroke-width="0.7"/><circle cx="9" cy="8" r="2.3" fill="#eee" stroke="#333"/><path d="M10.5 9.5L13 12" stroke="#333" stroke-width="1.3"/></svg>
<div class="sep" style="left:418.5px;top:43.5px;height:16px"></div>
<svg style="left:425px;top:45px" width="13" height="12"><path d="M4.5 0.5H9.5L12 3V11.5H4.5Z" fill="#fff" stroke="#333"/><rect x="0" y="7" width="6" height="5" fill="#333"/><rect x="1.5" y="8.5" width="3" height="2" fill="#ccc"/></svg>
<svg style="left:450px;top:44px" width="4" height="14"><rect x="0" y="0" width="1" height="1" fill="#a8a8b0"/><rect x="2" y="0" width="1" height="1" fill="#a8a8b0"/><rect x="1" y="2" width="1" height="1" fill="#a8a8b0"/><rect x="3" y="2" width="1" height="1" fill="#a8a8b0"/><rect x="0" y="4" width="1" height="1" fill="#a8a8b0"/><rect x="2" y="4" width="1" height="1" fill="#a8a8b0"/><rect x="1" y="6" width="1" height="1" fill="#a8a8b0"/><rect x="3" y="6" width="1" height="1" fill="#a8a8b0"/><rect x="0" y="8" width="1" height="1" fill="#a8a8b0"/><rect x="2" y="8" width="1" height="1" fill="#a8a8b0"/><rect x="1" y="10" width="1" height="1" fill="#a8a8b0"/><rect x="3" y="10" width="1" height="1" fill="#a8a8b0"/><rect x="0" y="12" width="1" height="1" fill="#a8a8b0"/><rect x="2" y="12" width="1" height="1" fill="#a8a8b0"/></svg>
<svg style="left:462px;top:46px" width="14" height="11"><path d="M0 4.5H4" stroke="#1c62b8" stroke-width="1.6"/><path d="M3.5 2L6.5 4.5L3.5 7Z" fill="#1c62b8"/><path d="M10 0.5L13.5 2.5V7L10 9L6.5 7V2.5Z" fill="#fff" stroke="#555"/><path d="M6.5 2.5L10 4.5L13.5 2.5M10 4.5V9" stroke="#555" fill="none"/></svg>
<svg style="left:481px;top:45px" width="13" height="12"><path d="M1 1L5 5M8 1C11 2 11 4 10 6" stroke="#333" stroke-width="1.6" fill="none"/><path d="M4 6L6 3L6.5 6.5Z M8 6H12L10 8Z" fill="#333"/><rect x="0.5" y="9" width="3" height="3" fill="#333"/><rect x="5" y="9" width="3" height="3" fill="#333"/><rect x="9.5" y="9" width="3" height="3" fill="#333"/></svg>
<div class="sep" style="left:498.6px;top:43.5px;height:16px"></div>
<svg style="left:504px;top:45.5px" width="13" height="11"><rect x="0.5" y="0.5" width="12" height="10" fill="#fff" stroke="#444"/><rect x="0" y="0" width="13" height="1.8" fill="#444"/><path d="M1.5 10L4 4.5L6.5 10Z" fill="#f3c620"/><path d="M7.5 6L9 8L11.5 4" stroke="#333" stroke-width="1.1" fill="none"/></svg>
<svg style="left:525px;top:45px" width="9" height="12"><path d="M2.5 2.5H0.5V11.5H8.5V2.5H6.5" fill="none" stroke="#444" stroke-width="1.1"/><rect x="2.5" y="0.5" width="4" height="2.5" fill="none" stroke="#444"/><path d="M2 6.5L4 9L7 4.5" stroke="#333" stroke-width="1.1" fill="none"/></svg>
<svg style="left:541px;top:45px" width="12" height="12"><path d="M6 0.5H0.5V11.5H6" stroke="#444" stroke-width="1.1" fill="none"/><path d="M3 6H9" stroke="#333" stroke-width="1.8"/><path d="M8 2.5L11.5 6L8 9.5Z" fill="#333"/></svg>
<svg style="left:559.5px;top:45px" width="11" height="12"><path d="M3.5 0.5H8L10.5 3V11.5H4" fill="#fff" stroke="#333"/><circle cx="4" cy="7.5" r="2.2" fill="#fff" stroke="#1c6fc8" stroke-width="1.1"/><path d="M2.5 9L0.5 11.5" stroke="#1c6fc8" stroke-width="1.4"/></svg>
<svg style="left:585px;top:44px" width="4" height="14"><rect x="0" y="0" width="1" height="1" fill="#a8a8b0"/><rect x="2" y="0" width="1" height="1" fill="#a8a8b0"/><rect x="1" y="2" width="1" height="1" fill="#a8a8b0"/><rect x="3" y="2" width="1" height="1" fill="#a8a8b0"/><rect x="0" y="4" width="1" height="1" fill="#a8a8b0"/><rect x="2" y="4" width="1" height="1" fill="#a8a8b0"/><rect x="1" y="6" width="1" height="1" fill="#a8a8b0"/><rect x="3" y="6" width="1" height="1" fill="#a8a8b0"/><rect x="0" y="8" width="1" height="1" fill="#a8a8b0"/><rect x="2" y="8" width="1" height="1" fill="#a8a8b0"/><rect x="1" y="10" width="1" height="1" fill="#a8a8b0"/><rect x="3" y="10" width="1" height="1" fill="#a8a8b0"/><rect x="0" y="12" width="1" height="1" fill="#a8a8b0"/><rect x="2" y="12" width="1" height="1" fill="#a8a8b0"/></svg>
<svg style="left:598.5px;top:45px" width="11" height="12"><path d="M4 0H11V12L7.5 9L4 12Z" fill="#333"/><rect x="0" y="3" width="7" height="5" fill="#444"/><rect x="2" y="4.5" width="3" height="2" fill="#ccc"/></svg>
<div class="sep" style="left:615.5px;top:43.5px;height:16px"></div>
<svg style="left:621px;top:45px" width="13" height="12"><path d="M4 0H11V12L7.5 9L4 12Z" fill="#333"/><rect x="0" y="3" width="1.4" height="5" fill="#1c62b8"/><path d="M2 5.5H7.5" stroke="#1c62b8" stroke-width="1.8"/><path d="M5 2.5L2 5.5L5 8.5Z" fill="#1c62b8"/></svg>
<svg style="left:640.5px;top:45px" width="13" height="12"><path d="M4 0H11V12L7.5 9L4 12Z" fill="#333"/><path d="M1.5 5.5H7" stroke="#1c62b8" stroke-width="1.8"/><path d="M4 2.5L0.5 5.5L4 8.5Z" fill="#1c62b8"/></svg>
<svg style="left:658px;top:45px" width="13" height="12"><path d="M0 0H7V12L3.5 9L0 12Z" fill="#333"/><path d="M5 5.5H10" stroke="#1c62b8" stroke-width="1.8"/><path d="M9 2.5L12.5 5.5L9 8.5Z" fill="#1c62b8"/></svg>
<svg style="left:676px;top:45px" width="13" height="12"><path d="M0 0H7V12L3.5 9L0 12Z" fill="#333"/><path d="M4 5.5H9" stroke="#1c62b8" stroke-width="1.8"/><path d="M8 2.5L11 5.5L8 8.5Z" fill="#1c62b8"/><rect x="11.5" y="3" width="1.4" height="5" fill="#1c62b8"/></svg>
<div class="sep" style="left:693.4px;top:43.5px;height:16px"></div>
<svg style="left:699.5px;top:45px" width="13" height="12"><path d="M0.5 0.5L4.5 4.5M4.5 0.5L0.5 4.5" stroke="#d04020" stroke-width="1.2"/><path d="M4 3H8V11L6 9.5L4 11Z" fill="#333"/><path d="M7 5H9.5V12L8 10.5L7 12Z" fill="#555"/><path d="M10 6H12V12L11 11L10 12Z" fill="#777"/></svg>
<svg style="left:724.7px;top:44px" width="4" height="14"><rect x="0" y="0" width="1" height="1" fill="#a8a8b0"/><rect x="2" y="0" width="1" height="1" fill="#a8a8b0"/><rect x="1" y="2" width="1" height="1" fill="#a8a8b0"/><rect x="3" y="2" width="1" height="1" fill="#a8a8b0"/><rect x="0" y="4" width="1" height="1" fill="#a8a8b0"/><rect x="2" y="4" width="1" height="1" fill="#a8a8b0"/><rect x="1" y="6" width="1" height="1" fill="#a8a8b0"/><rect x="3" y="6" width="1" height="1" fill="#a8a8b0"/><rect x="0" y="8" width="1" height="1" fill="#a8a8b0"/><rect x="2" y="8" width="1" height="1" fill="#a8a8b0"/><rect x="1" y="10" width="1" height="1" fill="#a8a8b0"/><rect x="3" y="10" width="1" height="1" fill="#a8a8b0"/><rect x="0" y="12" width="1" height="1" fill="#a8a8b0"/><rect x="2" y="12" width="1" height="1" fill="#a8a8b0"/></svg>
<svg style="left:738.5px;top:45px" width="12" height="12"><circle cx="7.3" cy="4.7" r="3.6" fill="none" stroke="#333" stroke-width="1.4"/><path d="M4.7 7.3L0.8 11.2" stroke="#333" stroke-width="1.8"/></svg>
<svg style="left:757px;top:45px" width="12" height="12"><path d="M2 2H5" stroke="#1c62b8" stroke-width="1.6"/><path d="M3 0L0 2L3 4Z" fill="#1c62b8"/><circle cx="8" cy="6.5" r="2.8" fill="none" stroke="#333" stroke-width="1.2"/><path d="M6 8.5L3 11.5" stroke="#333" stroke-width="1.5"/></svg>
<svg style="left:775.5px;top:45px" width="12" height="12"><path d="M0 2H3.5" stroke="#1c62b8" stroke-width="1.6"/><path d="M3 0L6 2L3 4Z" fill="#1c62b8"/><circle cx="8" cy="6.5" r="2.8" fill="none" stroke="#333" stroke-width="1.2"/><path d="M6 8.5L3 11.5" stroke="#333" stroke-width="1.5"/></svg>
<svg style="left:792.5px;top:45px" width="12" height="12"><path d="M0.5 2.5H3V0.5H7" fill="none" stroke="#444"/><rect x="0.5" y="2.5" width="6" height="8" fill="#f0f0f0" stroke="#444"/><circle cx="6" cy="5.5" r="3" fill="#fff" stroke="#333" stroke-width="1.2"/><path d="M8 7.5L11.5 11" stroke="#333" stroke-width="1.5"/></svg>
<div class="sep" style="left:810.7px;top:43.5px;height:16px"></div>
<svg style="left:816px;top:45px" width="13" height="12"><path d="M1.5 5V2.5H4.5" stroke="#1c62b8" stroke-width="1.2" fill="none"/><path d="M0 4L1.5 6L3 4Z" fill="#1c62b8"/><text x="5.5" y="4.5" font-family="Liberation Sans" font-size="5.5" font-weight="bold" fill="#333">ab</text><rect x="0.5" y="7" width="11" height="4.5" fill="#555"/><rect x="2" y="8" width="3" height="2.5" fill="#ddd"/><rect x="7" y="8" width="3" height="2.5" fill="#ddd"/></svg>
<svg style="left:835px;top:45px" width="12" height="12"><path d="M1.5 4V1.5H4.5" stroke="#1c62b8" stroke-width="1.2" fill="none"/><path d="M0 3L1.5 5L3 3Z" fill="#1c62b8"/><rect x="6" y="0.5" width="6" height="5" fill="#e8b964"/><rect x="0" y="6" width="7" height="6" fill="#e8b964"/></svg>
<svg style="left:860px;top:44px" width="4" height="14"><rect x="0" y="0" width="1" height="1" fill="#a8a8b0"/><rect x="2" y="0" width="1" height="1" fill="#a8a8b0"/><rect x="1" y="2" width="1" height="1" fill="#a8a8b0"/><rect x="3" y="2" width="1" height="1" fill="#a8a8b0"/><rect x="0" y="4" width="1" height="1" fill="#a8a8b0"/><rect x="2" y="4" width="1" height="1" fill="#a8a8b0"/><rect x="1" y="6" width="1" height="1" fill="#a8a8b0"/><rect x="3" y="6" width="1" height="1" fill="#a8a8b0"/><rect x="0" y="8" width="1" height="1" fill="#a8a8b0"/><rect x="2" y="8" width="1" height="1" fill="#a8a8b0"/><rect x="1" y="10" width="1" height="1" fill="#a8a8b0"/><rect x="3" y="10" width="1" height="1" fill="#a8a8b0"/><rect x="0" y="12" width="1" height="1" fill="#a8a8b0"/><rect x="2" y="12" width="1" height="1" fill="#a8a8b0"/></svg>
<svg style="left:872px;top:44px" width="14" height="14"><circle cx="7" cy="7" r="7" fill="#3b73c4"/><text x="3.3" y="11" font-family="Liberation Sans" font-size="10.5" font-weight="bold" fill="#fff">?</text></svg>
<svg style="left:891.5px;top:45px" width="11" height="12"><path d="M7 1.5A5 5 0 1 0 10.5 8.5" fill="none" stroke="#444" stroke-width="2.2"/><path d="M7 3.5A3 3 0 1 0 8.5 8" fill="none" stroke="#777" stroke-width="1"/><path d="M7 0.5L10 3" stroke="#444" stroke-width="1"/></svg>
<svg style="left:909.5px;top:45px" width="12" height="12"><rect x="0.5" y="1" width="11" height="10" fill="#fff" stroke="#333" stroke-width="1.1"/><path d="M2.5 3.5H5M7 3.5H9.5M2.5 6H5M7 6H9.5M2.5 8.5H5M7 8.5H9.5" stroke="#333" stroke-width="1.2"/></svg>
<div class="t" style="left:21px;top:67px">WebApp.src</div>
<svg style="left:80px;top:70.5px" width="6" height="4"><path d="M0 0H6L3 3Z" fill="#777"/></svg>
<div class="sep" style="left:89.5px;top:65.5px;height:16px"></div>
<svg style="left:95.5px;top:66.5px" width="13" height="12"><path d="M6.5 0V6" stroke="#333" stroke-width="1.3"/><path d="M3.5 2.5L6.5 6L9.5 2.5" stroke="#333" stroke-width="1.2" fill="none"/><path d="M0.5 5.5V11.5H12.5V5.5" stroke="#333" fill="none"/><path d="M2 8H4M6 8H8M10 8H11" stroke="#333"/><rect x="0.5" y="10" width="12" height="1.5" fill="#777"/></svg>
<svg style="left:113.8px;top:66.5px" width="12.5" height="12.5"><circle cx="6.25" cy="6.25" r="6.1" fill="#2c8c2f"/><path d="M4.5 3V9.5L9.5 6.25Z" fill="#fff"/></svg>
<svg style="left:132.2px;top:66.5px" width="12" height="12"><circle cx="6" cy="6" r="6" fill="#777"/><rect x="3.7" y="3.3" width="1.7" height="5.4" fill="#fff"/><rect x="6.6" y="3.3" width="1.7" height="5.4" fill="#fff"/></svg>
<svg style="left:152px;top:67.5px" width="10" height="10"><rect x="0" y="0" width="2" height="10" fill="#aaa"/><path d="M3.5 0L9.5 5L3.5 10Z" fill="#aaa"/></svg>
<div class="sep" style="left:167.3px;top:65.5px;height:16px"></div>
<svg style="left:174.5px;top:66.5px" width="11" height="12"><path d="M1 6C2 1 8 0.5 9 5" stroke="#666" stroke-width="1.6" fill="none"/><path d="M6.5 4.5H10.5V1Z" fill="#666"/><circle cx="5.5" cy="10" r="1.5" fill="#666"/></svg>
<svg style="left:195.5px;top:66.5px" width="6" height="12"><path d="M3 0V6" stroke="#666" stroke-width="1.3"/><path d="M0.5 3.5L3 6.5L5.5 3.5Z" fill="#666"/><circle cx="3" cy="10" r="1.5" fill="#666"/></svg>
<svg style="left:213.3px;top:66.5px" width="6" height="12"><path d="M3 2V7" stroke="#666" stroke-width="1.3"/><path d="M0.5 3.5L3 0.5L5.5 3.5Z" fill="#666"/><circle cx="3" cy="10" r="1.5" fill="#666"/></svg>
<svg style="left:229.5px;top:67.5px" width="12" height="11"><path d="M0.5 1L6 5.5L0.5 10Z" fill="#aaa"/><path d="M7.5 0.5H11M9.2 0.5V10.5M7.5 10.5H11" stroke="#777" stroke-width="1"/></svg>
<svg style="left:248px;top:66.5px" width="11" height="12"><path d="M2 1A3 3 0 0 0 2 6" stroke="#888" stroke-width="1.1" fill="none"/><path d="M0 5L2.5 7L3 4Z" fill="#888"/><path d="M5 5V11M8 5V11M3.5 7H10M3.5 9.5H10" stroke="#555" stroke-width="1.1"/></svg>
<div class="sep" style="left:264.8px;top:65.5px;height:16px"></div>
<svg style="left:270.5px;top:66.5px" width="11" height="12"><path d="M2 5C1 1 6 0 6.5 3.5" stroke="#888" stroke-width="1.5" fill="none"/><circle cx="6" cy="3" r="1.3" fill="#888"/><path d="M6 6V11.5L10.5 8.75Z" fill="#aaa"/></svg>
<svg style="left:289px;top:66.5px" width="12" height="12"><circle cx="6" cy="6" r="5.4" fill="none" stroke="#999" stroke-width="1.1"/><rect x="3.5" y="3.5" width="5" height="5" fill="#888"/></svg>
<svg style="left:314px;top:65.5px" width="4" height="14"><rect x="0" y="0" width="1" height="1" fill="#a8a8b0"/><rect x="2" y="0" width="1" height="1" fill="#a8a8b0"/><rect x="1" y="2" width="1" height="1" fill="#a8a8b0"/><rect x="3" y="2" width="1" height="1" fill="#a8a8b0"/><rect x="0" y="4" width="1" height="1" fill="#a8a8b0"/><rect x="2" y="4" width="1" height="1" fill="#a8a8b0"/><rect x="1" y="6" width="1" height="1" fill="#a8a8b0"/><rect x="3" y="6" width="1" height="1" fill="#a8a8b0"/><rect x="0" y="8" width="1" height="1" fill="#a8a8b0"/><rect x="2" y="8" width="1" height="1" fill="#a8a8b0"/><rect x="1" y="10" width="1" height="1" fill="#a8a8b0"/><rect x="3" y="10" width="1" height="1" fill="#a8a8b0"/><rect x="0" y="12" width="1" height="1" fill="#a8a8b0"/><rect x="2" y="12" width="1" height="1" fill="#a8a8b0"/></svg>
<svg style="left:326.5px;top:66.5px" width="13" height="12"><path d="M2.5 4V0.5H12.5V8.5H8" fill="none" stroke="#333"/><rect x="2.5" y="0" width="10" height="1.5" fill="#333"/><circle cx="4" cy="8" r="3.8" fill="#e8210c"/></svg>
<svg style="left:345.5px;top:66.5px" width="12" height="12"><rect x="2.5" y="0.5" width="9" height="8" fill="none" stroke="#777"/><rect x="0.5" y="3" width="9" height="8.5" fill="#eee" stroke="#555"/><path d="M0.5 3.5L5 8L9.5 3.5" stroke="#555" fill="none"/><rect x="6" y="8.5" width="5" height="3.5" fill="#555"/></svg>
<div class="sep" style="left:362.5px;top:65.5px;height:16px"></div>
<svg style="left:368.5px;top:66.5px" width="13" height="13"><path d="M2 0.5H0.5V8.5H2M11 0.5H12.5V8.5H11" stroke="#999" fill="none"/><path d="M6.5 1.5L9.5 3V6L6.5 7.5L3.5 6V3Z" fill="#999"/><path d="M4 11.5L6.5 9L9 11.5" stroke="#bbb" fill="none"/></svg>
<svg style="left:387px;top:66.5px" width="13" height="13"><path d="M2 0.5H0.5V8.5H2M11 0.5H12.5V8.5H11" stroke="#999" fill="none"/><circle cx="6.5" cy="4.5" r="3.5" fill="none" stroke="#999"/><path d="M3 4.5H10M6.5 1V8" stroke="#999"/><path d="M4 11.5L6.5 9L9 11.5" stroke="#bbb" fill="none"/></svg>
<svg style="left:405.5px;top:67.5px" width="12" height="10"><circle cx="3" cy="7" r="2.3" fill="none" stroke="#888" stroke-width="1.2"/><circle cx="9" cy="7" r="2.3" fill="none" stroke="#888" stroke-width="1.2"/><path d="M1 6L4 1M11 6L8 1M5 7H7" stroke="#888"/></svg>
<svg style="left:425px;top:66.5px" width="11" height="12"><rect x="0.5" y="0.5" width="10" height="10" fill="#fff" stroke="#999"/><rect x="0" y="0" width="11" height="2" fill="#999"/><path d="M0.5 5H10.5M0.5 7.5H10.5M4 2V10.5M7 2V10.5" stroke="#aaa"/></svg>
<div class="sep" style="left:440.7px;top:65.5px;height:16px"></div>
<svg style="left:447px;top:67.5px" width="12" height="11"><path d="M2 0.5H12M4 5H12M4 9.5H12" stroke="#666" stroke-width="1.8"/><path d="M1.5 4V10H3" stroke="#888" fill="none"/></svg>
<svg style="left:472px;top:65.5px" width="4" height="14"><rect x="0" y="0" width="1" height="1" fill="#a8a8b0"/><rect x="2" y="0" width="1" height="1" fill="#a8a8b0"/><rect x="1" y="2" width="1" height="1" fill="#a8a8b0"/><rect x="3" y="2" width="1" height="1" fill="#a8a8b0"/><rect x="0" y="4" width="1" height="1" fill="#a8a8b0"/><rect x="2" y="4" width="1" height="1" fill="#a8a8b0"/><rect x="1" y="6" width="1" height="1" fill="#a8a8b0"/><rect x="3" y="6" width="1" height="1" fill="#a8a8b0"/><rect x="0" y="8" width="1" height="1" fill="#a8a8b0"/><rect x="2" y="8" width="1" height="1" fill="#a8a8b0"/><rect x="1" y="10" width="1" height="1" fill="#a8a8b0"/><rect x="3" y="10" width="1" height="1" fill="#a8a8b0"/><rect x="0" y="12" width="1" height="1" fill="#a8a8b0"/><rect x="2" y="12" width="1" height="1" fill="#a8a8b0"/></svg>
<svg style="left:486px;top:66.5px" width="12" height="12"><rect x="0.5" y="0.5" width="11" height="1.8" fill="#333"/><path d="M0.5 5C0.5 3.5 6 3.5 6 5V11C6 12.3 0.5 12.3 0.5 11Z" fill="#333"/><rect x="7" y="3.5" width="4.5" height="8" fill="#fff" stroke="#333"/><path d="M7 6H11.5M7 8.5H11.5" stroke="#333"/></svg>
<svg style="left:504px;top:66.5px" width="12" height="12"><path d="M0.5 5C0.5 3.5 6 3.5 6 5V11C6 12.3 0.5 12.3 0.5 11Z" fill="#333"/><rect x="3" y="0" width="2.5" height="2.5" fill="#333"/><rect x="6.5" y="0" width="2.5" height="2.5" fill="#333"/><rect x="9.5" y="0" width="2.5" height="2.5" fill="#333"/><rect x="7" y="4" width="2.5" height="2.5" fill="#333"/><rect x="9.5" y="4" width="2.5" height="2.5" fill="#333"/><rect x="7" y="8" width="2.5" height="2.5" fill="#333"/><rect x="9.5" y="8" width="2.5" height="2.5" fill="#333"/></svg>
<svg style="left:522px;top:66.5px" width="13" height="13"><circle cx="8.5" cy="4.5" r="4" fill="none" stroke="#777"/><path d="M4.5 4.5H12.5M8.5 0.5V8.5" stroke="#999"/><circle cx="3.5" cy="5" r="2.3" fill="#333"/><rect x="0.5" y="8" width="6" height="4.5" fill="#333"/></svg>
<svg style="left:547px;top:65.5px" width="4" height="14"><rect x="0" y="0" width="1" height="1" fill="#a8a8b0"/><rect x="2" y="0" width="1" height="1" fill="#a8a8b0"/><rect x="1" y="2" width="1" height="1" fill="#a8a8b0"/><rect x="3" y="2" width="1" height="1" fill="#a8a8b0"/><rect x="0" y="4" width="1" height="1" fill="#a8a8b0"/><rect x="2" y="4" width="1" height="1" fill="#a8a8b0"/><rect x="1" y="6" width="1" height="1" fill="#a8a8b0"/><rect x="3" y="6" width="1" height="1" fill="#a8a8b0"/><rect x="0" y="8" width="1" height="1" fill="#a8a8b0"/><rect x="2" y="8" width="1" height="1" fill="#a8a8b0"/><rect x="1" y="10" width="1" height="1" fill="#a8a8b0"/><rect x="3" y="10" width="1" height="1" fill="#a8a8b0"/><rect x="0" y="12" width="1" height="1" fill="#a8a8b0"/><rect x="2" y="12" width="1" height="1" fill="#a8a8b0"/></svg>
<div class="a" style="left:557px;top:64px;width:333px;height:18px;background:#fcfcfc;border:1px solid #e2e2e6"></div>
<div class="t" style="left:560.5px;top:67.5px;font-size:10.4px">DFSecurity_CNG.pkg</div>
<svg style="left:5px;top:106px" width="13" height="13"><path d="M6 2L11 4V9L6 11.5" fill="none" stroke="#888"/><path d="M6 4.5L11 4M6 4.5V11.5" stroke="#999"/><path d="M3 12V5" stroke="#777" stroke-width="1.6"/><path d="M0.5 6L3 2.5L5.5 6Z" fill="#777"/></svg>
<svg style="left:23px;top:106px" width="13" height="13"><path d="M6 2L11 4V9L6 11.5" fill="none" stroke="#888"/><path d="M6 4.5L11 4M6 4.5V11.5" stroke="#999"/><path d="M3 1V8" stroke="#777" stroke-width="1.6"/><path d="M0.5 7L3 10.5L5.5 7Z" fill="#777"/></svg>
<svg style="left:45.5px;top:106px" width="14" height="14"><path d="M1 5L5.5 0.5M3 1.5C2 3 3 4.5 4.5 4.5M6 4L8 6" stroke="#666" stroke-width="1.8" fill="none"/><circle cx="9.5" cy="9.5" r="3.5" fill="none" stroke="#888"/><path d="M6 9.5H13M9.5 6V13" stroke="#888"/></svg>
<svg style="left:64px;top:106px" width="14" height="14"><text x="0" y="6" font-family="Liberation Serif" font-size="7" font-style="italic" fill="#999">fx</text><circle cx="9.5" cy="9.5" r="3.5" fill="none" stroke="#888"/><path d="M6 9.5H13M9.5 6V13" stroke="#888"/></svg>
<!-- STATUS -->
<div class="a" style="left:0;top:668px;width:1280px;height:18px;background:#007acc"></div>
<div class="t" style="left:3px;top:671.5px;color:#fff;letter-spacing:-0.1px;font-size:10.3px;transform:none">C:\Projects\SecurityMatters\Lib\DFSecurity\AppSrc\cSecurity.pkg</div>
<div class="t" style="left:961px;top:671.5px;color:#fff">Ln 278</div>
<div class="t" style="left:999.5px;top:671.5px;color:#fff">Col 1</div>
<svg style="left:1145px;top:671px" width="13" height="13"><circle cx="6.5" cy="6.5" r="5.5" fill="#e8e8e8" stroke="#777" stroke-width="1"/><circle cx="6.5" cy="6.5" r="3.8" fill="none" stroke="#666" stroke-width="1.3"/><path d="M3.8 3.8L9.2 9.2" stroke="#666" stroke-width="1.3"/></svg>
<div class="t" style="left:1174.5px;top:671.5px;color:#fff">INS</div>
<div class="t" style="left:1211px;top:671.5px;color:#7ec0f0">CAPS</div>
<div class="t" style="left:1248px;top:671.5px;color:#fff">NUM</div>
<div class="a" style="left:0;top:686px;width:1280px;height:34px;background:#000"></div>
<svg style="left:12.5px;top:696px" width="15" height="14"><path d="M0 2L6 1.2V6.5H0Z M7 1L15 0V6.5H7Z M0 7.5H6V12.8L0 12Z M7 7.5H15V14L7 13Z" fill="#fff"/></svg>
<svg style="left:53px;top:693.5px" width="20" height="20"><defs><linearGradient id="fd" x1="1" y1="0" x2="0" y2="1"><stop offset="0" stop-color="#3fd0ff"/><stop offset="0.5" stop-color="#1a8cf0"/><stop offset="1" stop-color="#1560d8"/></linearGradient></defs><path d="M13 0.5C17 2.5 19.5 6.5 19 11A9 9 0 1 1 2.5 5.5L4 2.5L6 4.5A9 9 0 0 1 13 2.5Z" fill="url(#fd)"/><circle cx="10.5" cy="9.5" r="5" fill="#0d2f8a"/><path d="M5 8C6 5.5 9 5 10 6.5C9 8 10 10 12 10.5C14 11 15.5 10 16 9C16 13 13 15.5 9.5 15C6.5 14.5 4.5 11.5 5 8Z" fill="#1a78e8"/><path d="M8 11.5C9.5 12.5 11.5 12.5 12.5 11.5" stroke="#0d2f8a" stroke-width="1" fill="none"/></svg>
<svg style="left:94.5px;top:693.5px" width="20" height="20"><defs><linearGradient id="ffx" x1="1" y1="0" x2="0.2" y2="1"><stop offset="0" stop-color="#ffe23a"/><stop offset="0.45" stop-color="#ff9a1e"/><stop offset="1" stop-color="#f0302a"/></linearGradient></defs><path d="M13 0.5C17 2.5 19.5 6.5 19 11A9 9 0 1 1 2.5 5.5L4 2.5L6 4.5A9 9 0 0 1 13 2.5Z" fill="url(#ffx)"/><circle cx="10.5" cy="9.5" r="5" fill="#3a6ee8"/><circle cx="11" cy="8" r="3" fill="#5a4ad0"/><path d="M4.5 8C5.5 5.5 8.5 4.5 10 6.5C9 8 10 10 12 10.5C14 11 15.5 10 16 9C16 13.5 13 15.8 9.5 15.3C6.5 14.8 4 11.5 4.5 8Z" fill="#ff7f1c"/></svg>
<svg style="left:136px;top:693.5px" width="19" height="19"><circle cx="9.5" cy="9.5" r="9.3" fill="#dd4537"/><path d="M9.5 9.5L1.5 5A9.3 9.3 0 0 0 7 18.5Z" fill="#1e9e50"/><path d="M9.5 9.5L7 18.5A9.3 9.3 0 0 0 18.8 8.5L17.5 5Z" fill="#fcc934"/><circle cx="9.5" cy="9.5" r="4.3" fill="#fff"/><circle cx="9.5" cy="9.5" r="3.3" fill="#3b7ee8"/></svg>
<svg style="left:177.5px;top:695.5px" width="18" height="15"><path d="M0 1H6L7.5 2.5H18V15H0Z" fill="#f0cc6a"/><path d="M0 4H18V15H0Z" fill="#fde49a"/><path d="M5 14V10H13V14H11V12H7V14Z" fill="#2b8fe0"/></svg>
<div class="a" style="left:87px;top:717.5px;width:34px;height:2.5px;background:#76b9ed"></div>
<div class="a" style="left:170px;top:717.5px;width:34px;height:2.5px;background:#76b9ed"></div>
<div class="a" style="left:208px;top:686.5px;width:40.5px;height:33.5px;background:#333"></div>
<div class="a" style="left:208px;top:717.5px;width:40.5px;height:2.5px;background:#76b9ed"></div>
<div class="a" style="left:217.6px;top:693px;width:20.6px;height:20px;background:#f05a1a;border-radius:1px 1px 8px 1px"></div>
<div class="t" style="left:219px;top:698px;font-size:11.5px;line-height:12px;font-weight:bold;color:#fff;letter-spacing:-1.2px">DF</div>
<svg style="left:258.5px;top:693px" width="21" height="20"><circle cx="14" cy="7" r="6.3" fill="#111" stroke="#ddd" stroke-width="1.4"/><path d="M8 7H20M14 1V13M10 3.5C12 5 16 5 18 3.5M10 10.5C12 9 16 9 18 10.5" stroke="#ddd" stroke-width="1" fill="none"/><circle cx="5.5" cy="9" r="2.8" fill="#888" stroke="#ddd"/><rect x="1" y="12.5" width="9" height="7" fill="#111" stroke="#ddd" stroke-width="1.2"/></svg>
<svg style="left:300px;top:693px" width="21" height="21"><path d="M1 3C1 0 11 0 11 3V14C11 17 1 17 1 14Z" fill="#f2b43c"/><ellipse cx="6" cy="3" rx="5" ry="2" fill="#fde29a"/><path d="M14 1H18V5M1 16V20H5" stroke="#3aa050" stroke-width="2" fill="none"/><path d="M10 19L19 10M11 11L19 19" stroke="#ccc" stroke-width="2"/></svg>
<svg style="left:342px;top:693px" width="20" height="21"><path d="M1 1H13L17 5V20H1Z" fill="#f4f4f4" stroke="#bbb"/><path d="M1 12H17V20H1Z" fill="#5ab048"/><path d="M4 12V7M6 12V8L8 10" stroke="#333" stroke-width="0.8" fill="none"/><path d="M11 15L19 2" stroke="#e0a020" stroke-width="2"/></svg>
<div class="a" style="left:335px;top:717.5px;width:34px;height:2.5px;background:#76b9ed"></div>

</body></html>
